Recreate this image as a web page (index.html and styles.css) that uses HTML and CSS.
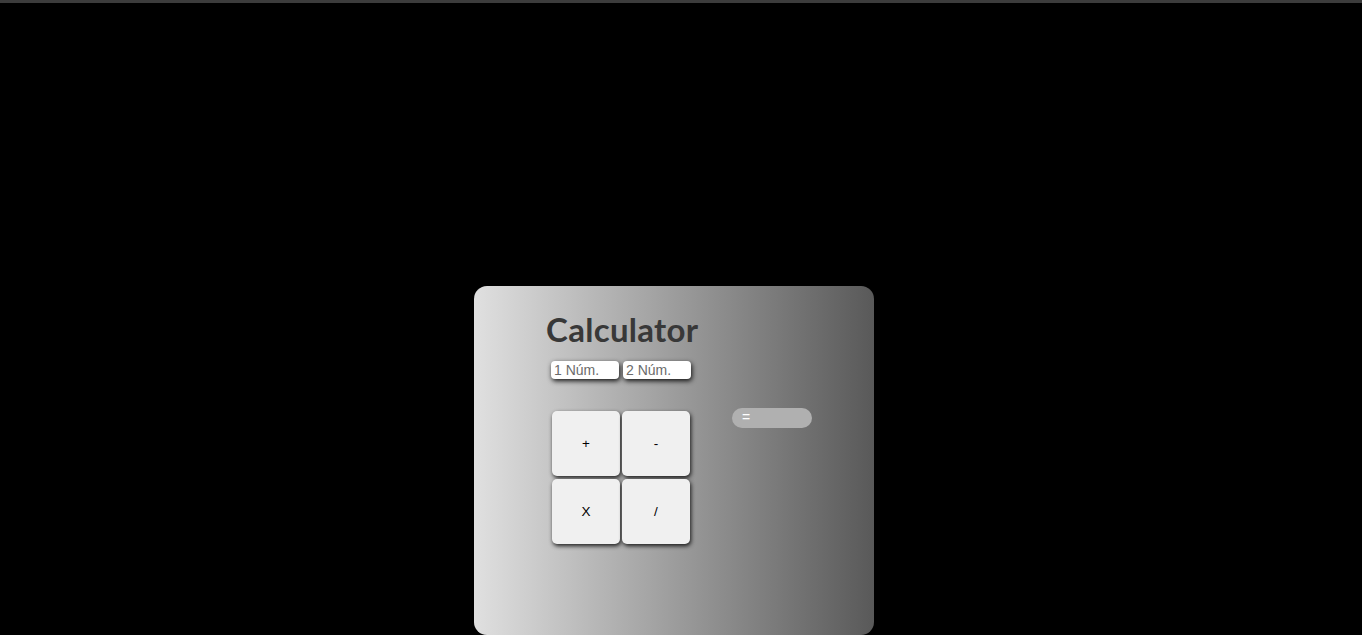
FILE: index.html
```
<!DOCTYPE html>
<html lang="es">
<head>
<meta charset="utf-8">
<title>Calculator</title>
<link rel="stylesheet" href="styles.css">
</head>
<body>
<div class="page">
  <div class="card">
    <h1 class="title">Calculator</h1>
    <div class="inputs">
      <input class="num" type="text" placeholder="1 Núm.">
      <input class="num" type="text" placeholder="2 Núm.">
    </div>
    <div class="work">
      <div class="keys">
        <button class="key">+</button>
        <button class="key">-</button>
        <button class="key">X</button>
        <button class="key">/</button>
      </div>
      <div class="result">=</div>
    </div>
  </div>
</div>
</body>
</html>
```
FILE: styles.css
```
html, body {
  margin: 0;
  padding: 0;
  background: #000;
  height: 100%;
  overflow: hidden;
}
body {
  border-top: 3px solid #3c3c3c;
  box-sizing: border-box;
}
.page {
  padding: 283px 0 0 474px;
}
.card {
  width: 400px;
  height: 349px;
  box-sizing: border-box;
  border-radius: 13px;
  background: linear-gradient(to right, #e0e0e0, #595959);
  padding: 21px 0 0 72px;
}
.title {
  margin: 0;
  font-family: "Lato", "Open Sans", sans-serif;
  font-weight: 700;
  font-size: 33px;
  line-height: 44px;
  letter-spacing: 0.3px;
  color: #383838;
}
.inputs {
  display: flex;
  gap: 4px;
  margin: 10px 0 0 5px;
}
.num {
  width: 68px;
  height: 18px;
  box-sizing: border-box;
  border: none;
  border-radius: 4px;
  background: #fff;
  padding: 0 3px;
  font-family: "Liberation Sans", Arial, sans-serif;
  font-size: 14px;
  color: #333;
  box-shadow: 1px 2px 5px rgba(0,0,0,0.9);
  outline: none;
}
.num::placeholder {
  color: #6b6b6b;
}
.work {
  display: flex;
  align-items: flex-start;
  gap: 42px;
  margin: 29px 0 0 6px;
}
.keys {
  display: grid;
  grid-template-columns: 68px 68px;
  grid-auto-rows: 65px;
  column-gap: 2px;
  row-gap: 3px;
  margin-top: 3px;
}
.key {
  border: none;
  border-radius: 5px;
  background: #f0f0f0;
  font-family: "Liberation Sans", Arial, sans-serif;
  font-size: 13.5px;
  color: #000;
  box-shadow: 1px 2px 4px rgba(0,0,0,0.85);
  padding: 0;
}
.result {
  width: 80px;
  height: 20px;
  box-sizing: border-box;
  border-radius: 10px;
  background: #b0b0b0;
  color: #fff;
  font-family: "Liberation Sans", Arial, sans-serif;
  font-size: 14px;
  line-height: 18px;
  padding-left: 10px;
}
```
